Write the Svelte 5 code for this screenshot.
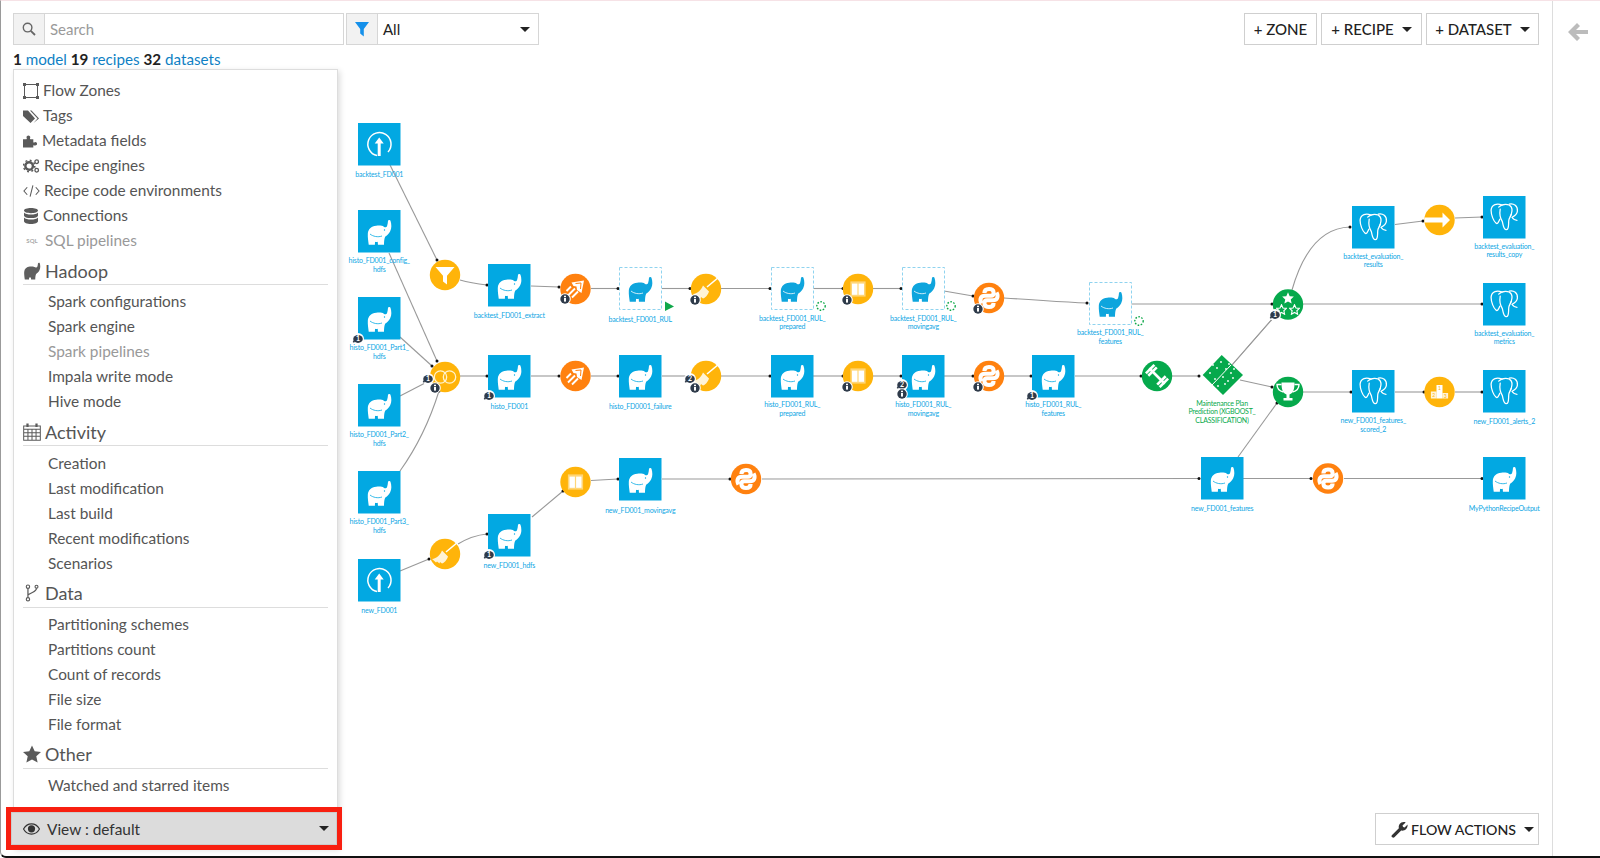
<script>
  // left menu
  const topItems = [
    { icon: 'zones', label: 'Flow Zones', w: 18 },
    { icon: 'tags', label: 'Tags', w: 18 },
    { icon: 'puzzle', label: 'Metadata fields', w: 17 },
    { icon: 'gears', label: 'Recipe engines', w: 19 },
    { icon: 'code', label: 'Recipe code environments', w: 19 },
    { icon: 'db', label: 'Connections', w: 18 },
    { icon: 'sql', label: 'SQL pipelines', w: 18, off: true }
  ]
  const sections = [
    { icon: 'elephant-g', title: 'Hadoop', items: ['Spark configurations', 'Spark engine', 'Spark pipelines', 'Impala write mode', 'Hive mode'], off: ['Spark pipelines'] },
    { icon: 'calendar', title: 'Activity', items: ['Creation', 'Last modification', 'Last build', 'Recent modifications', 'Scenarios'] },
    { icon: 'fork', title: 'Data', items: ['Partitioning schemes', 'Partitions count', 'Count of records', 'File size', 'File format'] },
    { icon: 'star', title: 'Other', items: ['Watched and starred items'] }
  ]

  // flow graph, coordinates on the canvas
  const squares = [
    [358, 123, 'upload', ['backtest_FD001'], 174],
    [358, 210, 'hadoop', ['histo_FD001_config_', 'hdfs'], 260.5],
    [358, 297, 'hadoop', ['histo_FD001_Part1_', 'hdfs'], 347.5],
    [358, 384, 'hadoop', ['histo_FD001_Part2_', 'hdfs'], 434.5],
    [358, 471, 'hadoop', ['histo_FD001_Part3_', 'hdfs'], 521.5],
    [358, 559, 'upload', ['new_FD001'], 610],
    [488, 264, 'hadoop', ['backtest_FD001_extract'], 315],
    [619, 267, 'dashed', ['backtest_FD001_RUL'], 319],
    [771, 267, 'dashed', ['backtest_FD001_RUL_', 'prepared'], 318],
    [902, 267, 'dashed', ['backtest_FD001_RUL_', 'movingavg'], 318],
    [1089, 282, 'dashed', ['backtest_FD001_RUL_', 'features'], 332.5],
    [488, 355, 'hadoop', ['histo_FD001'], 406],
    [619, 355, 'hadoop', ['histo_FD0001_failure'], 406],
    [771, 355, 'hadoop', ['histo_FD001_RUL_', 'prepared'], 404.5],
    [902, 355, 'hadoop', ['histo_FD001_RUL_', 'movingavg'], 404.5],
    [1032, 355, 'hadoop', ['histo_FD001_RUL_', 'features'], 404.5],
    [488, 514, 'hadoop', ['new_FD001_hdfs'], 565],
    [619, 458, 'hadoop', ['new_FD001_movingavg'], 510],
    [1201, 457, 'hadoop', ['new_FD001_features'], 508.5],
    [1352, 206, 'pg', ['backtest_evaluation_', 'results'], 256],
    [1483, 196, 'pg', ['backtest_evaluation_', 'results_copy'], 246],
    [1483, 283, 'pg', ['backtest_evaluation_', 'metrics'], 333],
    [1352, 370, 'pg', ['new_FD001_features_', 'scored_2'], 420.5],
    [1483, 370, 'pg', ['new_FD001_alerts_2'], 421.5],
    [1483, 457, 'hadoop', ['MyPythonRecipeOutput'], 508.5]
  ]

  const yellow = '#ffb40a'
  const orange = '#ff810f'
  const green = '#06a94c'
  const recipes = [
    [445, 275, yellow, 'funnel'],
    [445, 377, yellow, 'join'],
    [445, 554, yellow, 'brush'],
    [575.5, 289, orange, 'spark'],
    [575.5, 376, orange, 'spark'],
    [575.5, 482, yellow, 'window'],
    [706, 289, yellow, 'brush'],
    [706, 376, yellow, 'brush'],
    [746, 479, orange, 'python'],
    [858, 289, yellow, 'window'],
    [858, 376, yellow, 'window'],
    [989, 298, orange, 'python'],
    [989, 376, orange, 'python'],
    [1157, 376, green, 'barbell'],
    [1288, 304.5, green, 'stars'],
    [1288, 392, green, 'trophy'],
    [1328, 478.5, orange, 'python'],
    [1439.5, 220, yellow, 'arrow'],
    [1439.5, 392, yellow, 'podium']
  ]

  // from point, to point and optional control points
  const edges = [
    'M390 165L437 260', 'M389 253L437 361', 'M400 337L432 366', 'M400 396L427 382',
    'M400 471C415 450 430 420 439 391', 'M400 571L429 559',
    'M460 280C470 283 478 284 487 285', 'M531 286L559 287', 'M591 288.5L618 288.5',
    'M662 288.5L690 288.5', 'M721 288.5L770 288.5', 'M813 288.5L843 288.5', 'M873 288.5L901 288.5',
    'M944 291L973 296', 'M1004 298C1040 300 1060 302 1087 303', 'M1131 304L1272 304', 'M1303 304L1482 304',
    'M1292 290C1300 262 1315 228 1350 227', 'M1395 224.5L1423 221', 'M1455 218L1482 217',
    'M460 376L487 376', 'M531 376L559 376', 'M591 376L618 376', 'M662 376L690 376', 'M721 376L770 376',
    'M813 376L843 376', 'M873 376L901 376', 'M944 376L973 376', 'M1004 376L1031 376', 'M1075 376L1141 376',
    'M1172 376L1199 376', 'M1232 365L1274 317', 'M1240 380L1272 387', 'M1303 392L1351 392',
    'M1395 392L1424 392', 'M1455 392L1482 392', 'M1238 457L1277 403',
    'M458 544C468 538 476 535 487 534', 'M532 517L563 491', 'M591 480.5L618 479',
    'M662 479L730 479', 'M762 479L1199 478.5', 'M1243 478.5L1311 478.5', 'M1344 478.5L1482 478.5'
  ]
  const ends = edges.map((d) => d.match(/(-?[\d.]+) (-?[\d.]+)$/).slice(1).map(Number))

  const comments = [
    [358, 339, '1'], [428, 379, '1'], [489, 396, '1'], [690, 379, '2'], [902, 385, '2'],
    [1032, 396, '1'], [1275, 315, '1'], [489, 555, '1']
  ]
  const infos = [
    [565, 299], [695, 300], [847, 300], [978, 309], [435, 388], [695, 388],
    [847, 387], [902, 394], [978, 387]
  ]
  const spinners = [[821, 306], [951, 306], [1139, 321]]
  const seeds = [[-12, -2], [-7, 4], [-5, -7], [-1, -13], [1, 2], [4, -6], [7, -11], [-4, 11], [3, 9], [9, -2], [11, 3], [-9, -10], [6, 6], [12, -6]]
  const snake = 'M-7.5 5.5C-9.8 1 -8 -2.2 -4 -2.2H2C4 -2.2 4.6 -3.6 4.6 -5.5C4.6 -8 2.5 -9 0 -9C-2.5 -9 -4.6 -8 -4.6 -5'
</script>

<svg class="defs" aria-hidden="true">
  <defs>
    <symbol id="elephant" viewBox="0 0 42 42">
      <path d="M10.6 34.3C10.2 31 9.5 27 9.7 23.5C10 19 13 16 18 15.6C21 15.2 24 15.4 25.5 16.5C27 17.6 28.3 17 28.8 15.5C29.3 14 29.5 12.5 29.6 11C29.8 9.9 31.6 9.5 32.1 10.6C33.2 14 33.4 18 31.8 21C30.6 23.5 28.5 25.6 27 26.2C26 28 25.7 31 25.7 34.3L19.7 34.3L19.5 31.4C18.6 31.7 17.6 31.7 16.8 31.4L16.7 34.3Z" />
    </symbol>
    <symbol id="pg" viewBox="0 0 42 42">
      <g fill="none" stroke="#fff" stroke-width="1.25" stroke-linecap="round" stroke-linejoin="round">
        <path d="M19 9C14 7 8.5 8 8 14C8 19 10.5 25 13 27C14.5 28 15.6 25 16.6 23" />
        <path d="M15.5 11C19 7.4 26 7.4 28 11C29.5 14 28 18 27 20" />
        <path d="M17 13C16 19 17 22 19 25C20 28 20 33.3 23 33.3C26 33.3 25 28 25.5 24C25.7 22 27 21 28 18" />
        <path d="M26 8C30.5 7 34.5 10 34 15C33.5 19 31 20 28.6 21C30 23 32 24 33.6 24" />
      </g>
    </symbol>
    <symbol id="i-zones" viewBox="0 0 16 16">
      <path d="M1.5 1.5H14.5V14.5H1.5Z" fill="none" stroke="currentColor" />
      <path d="M0 0H3V3H0ZM13 0H16V3H13ZM0 13H3V16H0ZM13 13H16V16H13Z" fill="currentColor" />
    </symbol>
    <symbol id="i-tags" viewBox="0 0 16 16">
      <path d="M0 2.5V8L7.5 15L12 10.5L5 2.5ZM7 2.5L14.5 10.5L10.5 15L16 10.5L8.5 2.5Z" fill="currentColor" />
    </symbol>
    <symbol id="i-puzzle" viewBox="0 0 16 16">
      <path d="M0 6H3.5C4.5 6 4 5 3.8 4.4C3.4 3 4.6 2 5.8 2C7 2 8 3 7.7 4.4C7.5 5 7 6 8 6H11V9C11 10 12 9.3 12.6 9.2C14 9 15 9.8 15 11C15 12.2 14 13 12.6 12.8C12 12.7 11 12 11 13V15H0Z" fill="currentColor" />
    </symbol>
    <symbol id="i-gears" viewBox="0 0 18 16">
      <circle cx="6.5" cy="8" r="4" fill="none" stroke="currentColor" stroke-width="2.6" />
      <circle cx="6.5" cy="8" r="6" fill="none" stroke="currentColor" stroke-width="1.6" stroke-dasharray="2 2.7" />
      <circle cx="14.5" cy="3.5" r="1.9" fill="none" stroke="currentColor" stroke-width="1.4" />
      <circle cx="14.5" cy="12.5" r="1.9" fill="none" stroke="currentColor" stroke-width="1.4" />
    </symbol>
    <symbol id="i-code" viewBox="0 0 18 16">
      <path d="M4.5 4L1 8L4.5 12M13.5 4L17 8L13.5 12M10.5 2L7.5 14" fill="none" stroke="currentColor" stroke-width="1.1" />
    </symbol>
    <symbol id="i-db" viewBox="0 0 16 16">
      <path d="M8 0C12 0 15 1 15 2.6C15 4.2 12 5.2 8 5.2C4 5.2 1 4.2 1 2.6C1 1 4 0 8 0ZM1 4.6C2 6 5 6.6 8 6.6C11 6.6 14 6 15 4.6V7.4C15 9 12 10 8 10C4 10 1 9 1 7.4ZM1 9.4C2 10.8 5 11.4 8 11.4C11 11.4 14 10.8 15 9.4V13C15 14.8 12 16 8 16C4 16 1 14.8 1 13Z" fill="currentColor" />
    </symbol>
    <symbol id="i-calendar" viewBox="0 0 16 16">
      <path d="M.6 2.6H15.4V15.4H.6ZM.6 5.6H15.4M.6 8.6H15.4M.6 11.8H15.4M4.4 5.6V15.4M8 5.6V15.4M11.6 5.6V15.4" fill="none" stroke="currentColor" stroke-width=".9" />
      <path d="M3 .5H5V3.6H3ZM11 .5H13V3.6H11Z" fill="currentColor" />
    </symbol>
    <symbol id="i-fork" viewBox="0 0 12 16">
      <circle cx="2.4" cy="2.4" r="1.5" fill="none" stroke="currentColor" />
      <circle cx="2.4" cy="13.6" r="1.5" fill="none" stroke="currentColor" />
      <circle cx="10" cy="2.4" r="1.3" fill="none" stroke="currentColor" />
      <path d="M2.4 4V12M10 3.8C10 7 6 7 2.6 9.6" fill="none" stroke="currentColor" stroke-width="1.1" />
    </symbol>
    <symbol id="i-star" viewBox="0 0 16 16">
      <path d="M8 .4L10.4 5.6L16 6.2L11.8 10L13 15.6L8 12.8L3 15.6L4.2 10L0 6.2L5.6 5.6Z" fill="currentColor" />
    </symbol>
    <symbol id="star-shape" viewBox="0 0 16 16">
      <path d="M8 1L10.1 5.8L15.2 6.3L11.4 9.8L12.5 14.9L8 12.3L3.5 14.9L4.6 9.8L.8 6.3L5.9 5.8Z" />
    </symbol>
  </defs>
</svg>

<div class="root">
  <svg class="canvas" width="1600" height="858" viewBox="0 0 1600 858">
    {#each edges as d}
      <path class="edge" {d} />
    {/each}
    {#each ends as [x, y]}
      <circle cx={x} cy={y} r="1.5" fill="#111" />
    {/each}

    {#each squares as [x, y, kind, lines, ly]}
      {#if kind === 'dashed'}
        <rect class="dash" x={x + 0.5} y={y + 0.5} width="42" height="42" />
        <use href="#elephant" {x} {y} width="42.5" height="42.5" fill="#0ea5dd" />
        <path d="M{x + 12} {y + 24}C{x + 15} {y + 26.5} {x + 20} {y + 27.5} {x + 24} {y + 26}" class="collar" />
      {:else}
        <rect class="sq" {x} {y} width="42.5" height="42.5" />
        {#if kind === 'hadoop'}
          <use href="#elephant" {x} {y} width="42.5" height="42.5" fill="#fff" />
          <path d="M{x + 12} {y + 24}C{x + 15} {y + 26.5} {x + 20} {y + 27.5} {x + 24} {y + 26}" class="collar-b" />
          <circle cx={x + 26.5} cy={y + 20} r=".7" fill="#02a8e2" />
        {:else if kind === 'pg'}
          <use href="#pg" {x} {y} width="42.5" height="42.5" />
        {:else}
          <path d="M{x + 19} {y + 32.5}A11.6 11.6 0 1 1 {x + 30} {y + 29}" class="upload" />
          <path d="M{x + 19.7} {y + 33}V{y + 20.5}H{x + 16.7}L{x + 21.2} {y + 14.5}L{x + 25.7} {y + 20.5}H{x + 22.7}V{y + 33}Z" fill="#fff" />
        {/if}
      {/if}
      {#each lines as line, i}
        <text class="lbl" x={x + 21.25} y={ly + 2.5 + i * 8.7}>{line}</text>
      {/each}
    {/each}

    <!-- prediction model -->
    <polygon points="1202.7,375 1221.7,355 1243,375 1223,395" fill={green} />
    {#each seeds as [dx, dy]}
      <circle cx={1222 + dx} cy={375 + dy} r=".9" fill="#fff" />
    {/each}
    <path d="M1212 385L1231 365" stroke="#fff" stroke-width="1" />
    <path class="edge" d="M1232 365L1274 317" />
    <text class="lbl model" x="1222" y="406.2">Maintenance Plan</text>
    <text class="lbl model" x="1222" y="414.2">Prediction (XGBOOST_</text>
    <text class="lbl model" x="1222" y="422.8">CLASSIFICATION)</text>

    {#each recipes as [cx, cy, color, icon]}
      <g transform="translate({cx} {cy})">
        <circle r="15.2" fill={color} />
        {#if icon === 'funnel'}
          <path d="M-9.5 -8H9.5L2 .8V9.5L-2 6.5V.8Z" fill="#fff" />
        {:else if icon === 'join'}
          <circle cx="-4.5" r="6.2" fill="none" stroke="#fff3cf" stroke-width="1.3" />
          <circle cx="4.5" r="6.2" fill="none" stroke="#fff3cf" stroke-width="1.3" />
        {:else if icon === 'brush'}
          <path d="M1 -2L13 -12" stroke="#fff" stroke-width="1.6" />
          <path d="M-3 -3.5L3 2.5C2 6 -1 9 -3 9.5L-5 8L-5.5 9.5L-8 7.5L-9 8.6L-13 5C-8 4.5 -5 1 -3 -3.5Z" fill="#fff3d6" />
        {:else if icon === 'spark'}
          <path d="M-4 -6.5L8.5 -8.5L6 4L1.5 1L1 -2.5L-2 -3Z" fill="#fff" />
          <path d="M-9 2L-4.5 -2.5M-7.5 6.5L-.5 -.5M-3.5 8.5L2.5 2.5" stroke="#fff" stroke-width="1.9" />
          <path d="M0 -5.5L5.5 -6L5 0" fill="none" stroke={color} stroke-width="1" />
        {:else if icon === 'window'}
          <rect x="-7.6" y="-7.6" width="15.2" height="15.2" fill="#fff" fill-opacity=".45" />
          <rect x="-6" y="-5.4" width="5.4" height="11.2" fill="#fff" />
          <rect x=".6" y="-5.4" width="5.4" height="11.2" fill="#fff" />
        {:else if icon === 'python'}
          <path d={snake} class="snake" />
          <path d={snake} class="snake" transform="rotate(180)" />
        {:else if icon === 'barbell'}
          <g transform="rotate(45)" fill="#fff">
            <rect x="-11" y="-1.3" width="22" height="2.6" />
            <rect x="-11" y="-6" width="2.6" height="12" />
            <rect x="-7.6" y="-6" width="2.6" height="12" />
            <rect x="5" y="-6" width="2.6" height="12" />
            <rect x="8.4" y="-6" width="2.6" height="12" />
          </g>
        {:else if icon === 'stars'}
          <use href="#star-shape" x="-6.5" y="-13" width="13" height="13" fill="#fff" />
          <use href="#star-shape" x="-12" y="-.5" width="11" height="11" fill="none" stroke="#fff" stroke-width="1.6" />
          <use href="#star-shape" x="1" y="-.5" width="11" height="11" fill="none" stroke="#fff" stroke-width="1.6" />
        {:else if icon === 'trophy'}
          <path d="M-6.5 -9.5H6.5C6.5 -3 5.5 1 1.5 2.5V6H4.5V8.5H-4.5V6H-1.5V2.5C-5.5 1 -6.5 -3 -6.5 -9.5Z" fill="#fff" />
          <path d="M-6.5 -7.5H-11C-11 -3 -9 -1 -4.5 0M6.5 -7.5H11C11 -3 9 -1 4.5 0" fill="none" stroke="#fff" stroke-width="1.4" />
        {:else if icon === 'arrow'}
          <path d="M-15 -2.6H3V-7.5L10.5 0L3 7.5V2.6H-15Z" fill="#fff" />
        {:else if icon === 'podium'}
          <rect x="-8.6" y="-.5" width="5.6" height="7" fill="#fff" fill-opacity=".85" />
          <rect x="-3" y="-7" width="6" height="13.5" fill="#fff" />
          <rect x="3" y="1" width="5.6" height="5.5" fill="#fff" fill-opacity=".85" />
          <text class="pod" x="0" y="-2">1</text>
          <text class="pod" x="-5.8" y="5">2</text>
          <text class="pod" x="5.8" y="5.5">3</text>
        {/if}
      </g>
    {/each}

    {#each comments as [x, y, n]}
      <g transform="translate({x} {y})">
        <circle r="6" fill="#fff" />
        <path d="M-4.6 3.4L-3.6 1.6" stroke="#2f3b4a" stroke-width="1.6" />
        <ellipse rx="4.8" ry="3.9" fill="#2f3b4a" />
        <text class="badge" y="2.4">{n}</text>
      </g>
    {/each}
    {#each infos as [x, y]}
      <g transform="translate({x} {y})">
        <circle r="5.8" fill="#fff" />
        <circle r="4.7" fill="#2f3b4a" />
        <rect x="-1" y="-1" width="2" height="3.6" fill="#fff" />
        <rect x="-1" y="-3.3" width="2" height="1.5" fill="#fff" />
      </g>
    {/each}
    {#each spinners as [x, y]}
      <circle cx={x} cy={y} r="4.2" class="spin" />
    {/each}
    <path d="M665 301.5L674 306.5L665 311Z" fill="#10a84a" />
  </svg>

  <main class="main">
    <div class="toolbar">
      <div class="search">
        <span class="addon">
          <svg width="14" height="14" viewBox="0 0 14 14"><circle cx="5.6" cy="5.6" r="4.3" fill="none" stroke="#666" stroke-width="1.4" /><path d="M8.8 8.8L13 13" stroke="#666" stroke-width="1.8" /></svg>
        </span>
        <span class="field placeholder">Search</span>
      </div>
      <div class="filter">
        <span class="addon">
          <svg width="16" height="16" viewBox="0 0 16 16"><path d="M1 1H15L9.8 8V15.5L6.2 12.5V8Z" fill="#1590ea" /></svg>
        </span>
        <span class="field">All<i class="caret dark"></i></span>
      </div>
    </div>
    <div class="counts"><b>1</b> <a href="#m">model</a> <b>19</b> <a href="#r">recipes</a> <b>32</b> <a href="#d">datasets</a></div>

    <div class="lower">
      <aside class="panel">
        <ul class="top-items">
          {#each topItems as it}
            <li class:off={it.off}>
              {#if it.icon === 'sql'}
                <span class="sql">SQL</span>
              {:else}
                <svg class="ic" style="width:{it.w - 2}px"><use href="#i-{it.icon}" /></svg>
              {/if}
              {it.label}
            </li>
          {/each}
        </ul>
        {#each sections as s}
          <h4>
            {#if s.icon === 'elephant-g'}
              <svg class="ic head" width="18" height="20" viewBox="8 9 26 26" fill="#5f5f5f"><use href="#elephant" width="42" height="42" /></svg>
            {:else}
              <svg class="ic head"><use href="#i-{s.icon}" /></svg>
            {/if}
            {s.title}
          </h4>
          <ul class="sub">
            {#each s.items as item}
              <li class:off={s.off?.includes(item)}>{item}</li>
            {/each}
          </ul>
        {/each}
        <div class="view">
          <div class="view-in">
            <svg width="17" height="12" viewBox="0 0 17 12"><path d="M.5 6C2.5 2.5 5.2 .8 8.5 .8C11.8 .8 14.5 2.5 16.5 6C14.5 9.5 11.8 11.2 8.5 11.2C5.2 11.2 2.5 9.5 .5 6Z" fill="none" stroke="#333" stroke-width="1.2" /><circle cx="8.5" cy="5.8" r="3.6" fill="#333" /></svg>
            <span>View : default</span>
            <i class="caret dark"></i>
          </div>
        </div>
      </aside>
      <button class="btn flow">
        <svg width="17" height="17" viewBox="0 0 16 16"><path d="M1 13.2L7.4 6.8C6.8 4 8.6 1 12 1C12.7 1 13.3 1.1 13.8 1.4L10.8 4.2L11.4 5.6L12.8 6.2L15.6 3.2C16 6.8 13 9.6 9.6 9L3.2 15.4C2.6 16 1.8 16 1.2 15.4L.8 15C.3 14.5 .4 13.8 1 13.2Z" fill="#333" /></svg>
        <span>FLOW ACTIONS</span><i class="caret dark"></i>
      </button>
    </div>
    <div class="actions">
      <button class="btn zone">+ ZONE</button>
      <button class="btn recipe">+ RECIPE<i class="caret dark"></i></button>
      <button class="btn dataset">+ DATASET<i class="caret dark"></i></button>
    </div>
  </main>

  <nav class="rail">
    <svg width="20" height="18" viewBox="0 0 20 18"><path d="M9 0L12 3L8 7H20V11H8L12 15L9 18L0 9Z" fill="#bcbcbc" /></svg>
  </nav>
</div>

<style>
:global(body) {
  margin: 0;
  background: #fff;
  font-family: "Lato", "Liberation Sans", sans-serif;
}
.defs {
  position: absolute;
  width: 0;
  height: 0;
}
.root {
  position: relative;
  display: flex;
  width: 1600px;
  height: 858px;
  overflow: hidden;
  color: #333;
}
.root::after {
  content: "";
  position: absolute;
  inset: 0;
  border-top: 1px solid #f6e2e6;
  border-left: 1px solid #9a9a9a;
  border-bottom: 2px solid #111;
  border-bottom-left-radius: 6px;
  pointer-events: none;
}
.canvas {
  position: absolute;
  left: 0;
  top: 0;
}
.edge {
  fill: none;
  stroke: #999;
  stroke-width: 1.1;
}
.sq {
  fill: #02a8e2;
}
.dash {
  fill: #fff;
  stroke: #8fd3ef;
  stroke-width: 1;
  stroke-dasharray: 3 2;
}
.collar {
  fill: none;
  stroke: #fff;
  stroke-width: .8;
}
.collar-b {
  fill: none;
  stroke: #02a8e2;
  stroke-width: .8;
}
.upload {
  fill: none;
  stroke: #fff;
  stroke-width: 1.5;
}
.snake {
  fill: none;
  stroke: #fff;
  stroke-width: 4.1;
}
.lbl {
  font-size: 7px;
  letter-spacing: -.2px;
  fill: #0ea6e4;
  text-anchor: middle;
}
.model {
  fill: #06a94c;
}
.pod {
  font-size: 5px;
  fill: #ffb40a;
  text-anchor: middle;
}
.badge {
  font-size: 7px;
  font-weight: 700;
  fill: #fff;
  text-anchor: middle;
}
.spin {
  fill: none;
  stroke: #10a84a;
  stroke-width: 1.4;
  stroke-dasharray: 1.6 1.5;
}
.main {
  position: relative;
  flex: 1;
  min-width: 0;
  box-sizing: border-box;
  display: flex;
  flex-direction: column;
  padding: 13px 13px 13px 13px;
}
.toolbar {
  display: flex;
  gap: 2px;
  height: 32px;
}
.actions {
  position: absolute;
  top: 13px;
  right: 13px;
  display: flex;
  gap: 4px;
}
.search {
  display: flex;
  width: 331px;
  border: 1px solid #d6d6d6;
  box-sizing: border-box;
  background: #fff;
}
.filter {
  display: flex;
  width: 193px;
  border: 1px solid #d6d6d6;
  box-sizing: border-box;
  background: #fff;
}
.addon {
  flex: 0 0 30px;
  display: flex;
  align-items: center;
  justify-content: center;
  background: #f2f2f2;
  border-right: 1px solid #d6d6d6;
}
.field {
  flex: 1;
  display: flex;
  align-items: center;
  justify-content: space-between;
  padding: 0 8px 0 5px;
  font-size: 15px;
  color: #222;
}
.placeholder {
  color: #9a9a9a;
}
.counts {
  height: 20px;
  padding-top: 4px;
  line-height: 20px;
  font-size: 15.2px;
  color: #222;
  box-sizing: content-box;
}
.counts a {
  color: #0f7fc4;
  text-decoration: none;
}
.lower {
  flex: 1;
  display: flex;
  justify-content: space-between;
  align-items: flex-end;
  min-height: 0;
}
.panel {
  position: relative;
  box-sizing: border-box;
  align-self: stretch;
  width: 325px;
  margin-bottom: -3px;
  padding: 8px 9px 0 9px;
  display: flex;
  flex-direction: column;
  background: #fff;
  border: 1px solid #ddd;
  box-shadow: 2px 2px 6px rgba(0, 0, 0, .14);
  font-size: 15.4px;
}
ul {
  list-style: none;
  margin: 0;
  padding: 0;
}
li {
  height: 25px;
  line-height: 25px;
  color: #555;
  white-space: nowrap;
}
li.off {
  color: #999;
}
.top-items li {
  display: flex;
  align-items: center;
  gap: 4px;
}
.sub li {
  padding-left: 25px;
}
.ic {
  width: 16px;
  height: 16px;
  color: #5a5a5a;
  flex: none;
}
.sql {
  width: 18px;
  font-size: 6px;
  font-weight: 700;
  color: #aaa;
  text-align: center;
}
h4 {
  box-sizing: border-box;
  display: flex;
  align-items: center;
  gap: 4px;
  height: 32px;
  margin: 0 0 4.3px;
  padding-top: 4px;
  border-bottom: 1px solid #ddd;
  font-size: 18px;
  font-weight: 400;
  color: #555;
}
.head {
  width: 18px;
  height: 18px;
}
.view {
  position: absolute;
  left: -8px;
  bottom: -3px;
  box-sizing: border-box;
  width: 336px;
  height: 43px;
  border: 5px solid #f81f10;
}
.view-in {
  display: flex;
  align-items: center;
  gap: 7px;
  height: 100%;
  padding: 0 8px 0 12px;
  background: #dcdcdc;
  box-shadow: inset 0 0 0 1px #ccc;
  font-size: 15.4px;
  color: #333;
}
.view-in span {
  flex: 1;
}
.caret {
  display: inline-block;
  width: 0;
  height: 0;
  border-left: 5px solid transparent;
  border-right: 5px solid transparent;
  border-top: 5px solid #222;
}
.btn {
  box-sizing: border-box;
  height: 32px;
  display: inline-flex;
  align-items: center;
  justify-content: center;
  padding: 0;
  background: #fff;
  border: 1px solid #cfcfcf;
  font-family: inherit;
  font-size: 15px;
  font-weight: 500;
  white-space: nowrap;
  color: #222;
}
.zone {
  width: 73px;
}
.recipe {
  width: 101px;
}
.dataset {
  width: 113px;
}
.btn .caret {
  margin-left: 8px;
}
.flow {
  width: 164px;
  justify-content: flex-start;
  padding-left: 15px;
  gap: 3px;
  font-size: 14.2px;
}
.flow .caret {
  margin-left: 5px;
}
.rail {
  flex: 0 0 48px;
  box-sizing: border-box;
  border-left: 1px solid #ddd;
  padding: 23px 0 0 15px;
}
</style>
